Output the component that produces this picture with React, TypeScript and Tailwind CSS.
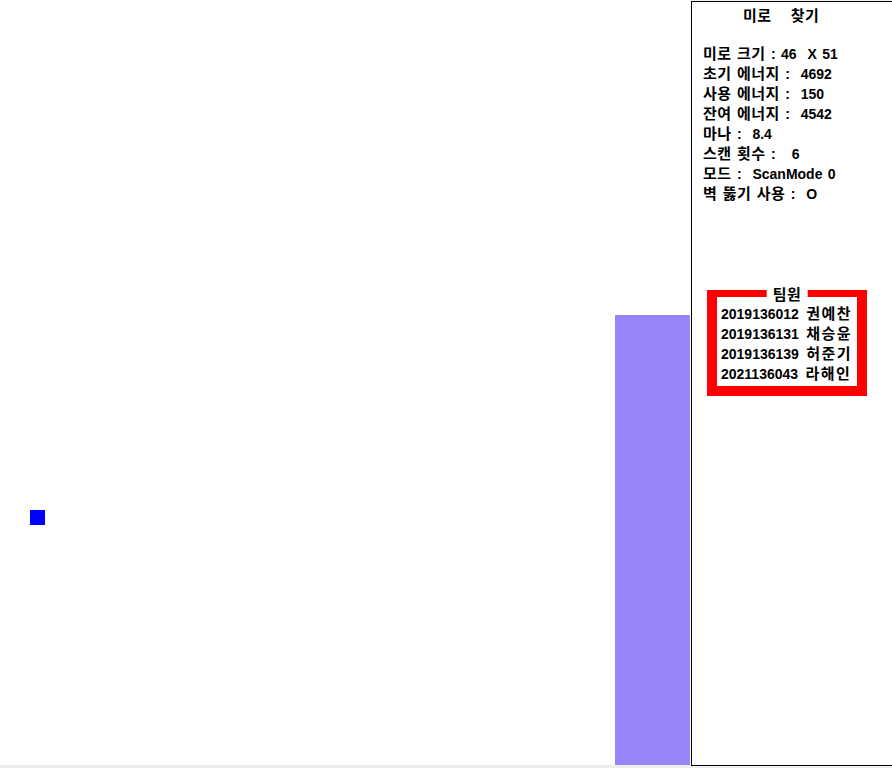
import React from "react";

const font = { fontFamily: '"Liberation Sans", "Noto Sans CJK KR", sans-serif', wordSpacing: "1.5px" };

function T({ text, k = "tracking-[0.5px]" }: { text: string; k?: string }) {
  const parts = text.split(/([\uac00-\ud7a3]+)/);
  return (
    <>
      {parts.map((p, i) =>
        /[\uac00-\ud7a3]/.test(p) ? (
          <span key={i} className={"text-[15px] leading-none " + k} style={{ fontFamily: '"Noto Sans CJK KR", sans-serif' }}>
            {p}
          </span>
        ) : (
          <span key={i}>{p}</span>
        )
      )}
    </>
  );
}

export default function App() {
  const lines = [
    "미로 크기 : 46  X 51",
    "초기 에너지 :  4692",
    "사용 에너지 :  150",
    "잔여 에너지 :  4542",
    "마나 :  8.4",
    "스캔 횟수 :   6",
    "모드 :  ScanMode 0",
    "벽 뚫기 사용 :  O",
  ];
  const members = [
    "2019136012 권예찬",
    "2019136131 채승윤",
    "2019136139 허준기",
    "2021136043 라해인",
  ];
  return (
    <div className="flex h-[768px] w-[892px] items-start bg-[#eeeeee] overflow-hidden" style={font}>
      <div className="relative h-[765px] w-[691px] shrink-0 bg-white">
        <div className="absolute left-[615px] top-[315px] h-[450px] w-[75px] bg-[#9985fa]" />
        <div className="absolute left-[30px] top-[510px] h-[15px] w-[15px] bg-[#0000ff]" />
      </div>
      <div className="mt-px flex h-[765px] w-[220px] shrink-0 flex-col border border-black bg-white text-[14px] font-bold leading-[20px] text-black">
        <div className="mt-[4px] h-[20px] whitespace-pre pl-[51px] [word-spacing:2.5px]">
          <T text="미로   찾기" />
        </div>
        <div className="mt-[18px] flex flex-col pl-[11px]">
          {lines.map((l) => (
            <div key={l} className="h-[20px] whitespace-pre">
              <T text={l} />
            </div>
          ))}
        </div>
        <div className="relative ml-[15px] mt-[86px] w-[160px] border-[10px] border-t-[7px] border-[#ff0000] pt-[7px] pb-[2px] pl-[4px]">
          <div className="absolute left-1/2 top-[-11px] h-[16px] -translate-x-1/2 whitespace-pre bg-white px-[6px] leading-[16px]">
            <T text="팀원" />
          </div>
          {members.map((m) => (
            <div key={m} className="h-[20px] whitespace-pre [word-spacing:3.5px]">
              <T text={m} k="tracking-[1.5px]" />
            </div>
          ))}
        </div>
      </div>
    </div>
  );
}
